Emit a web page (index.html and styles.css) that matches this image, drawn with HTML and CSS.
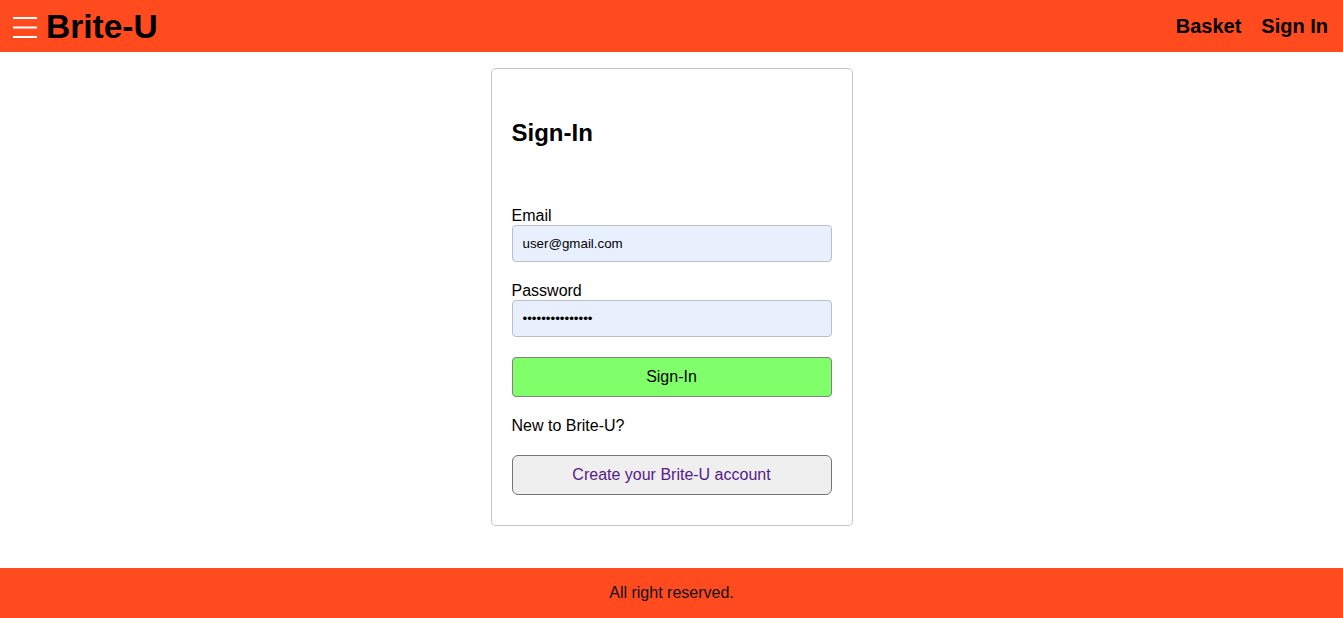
FILE: index.html
```html
<!DOCTYPE html>
<html lang="en">
<head>
<meta charset="utf-8">
<title>Brite-U</title>
<link rel="stylesheet" href="styles.css">
</head>
<body>
<div class="grid">
  <header class="topbar">
    <div class="brand-wrap">
      <button class="menu-btn" aria-label="menu">
        <svg width="26" height="26" viewBox="0 0 26 26"><path d="M1 4h24M1 13.5h24M1 23h24" stroke="#fff" stroke-width="2.2"/></svg>
      </button>
      <a class="brand" href="#">Brite-U</a>
    </div>
    <nav class="nav">
      <a href="#">Basket</a>
      <a href="#">Sign In</a>
    </nav>
  </header>
  <main class="main">
    <form class="card">
      <h2 class="title">Sign-In</h2>
      <label class="label" for="email">Email</label>
      <input class="field" id="email" type="email" value="user@gmail.com">
      <label class="label label-gap" for="password">Password</label>
      <input class="field" id="password" type="password" value="123456789012345">
      <button class="primary" type="button">Sign-In</button>
      <div class="newto">New to Brite-U?</div>
      <a class="secondary" href="#">Create your Brite-U account</a>
    </form>
  </main>
  <footer class="footer">All right reserved.</footer>
</div>
</body>
</html>
```
FILE: styles.css
```css
html, body {
  margin: 0;
  padding: 0;
}
body {
  font-family: "Liberation Sans", Arial, sans-serif;
  color: #000;
  background: #fff;
}
.grid {
  display: grid;
  grid-template-rows: 52px 1fr 50px;
  height: 100vh;
}
.topbar {
  background: #ff4b1e;
  display: flex;
  align-items: center;
  justify-content: space-between;
  padding: 0 15px 0 12px;
}
.brand-wrap {
  display: flex;
  align-items: center;
}
.menu-btn {
  background: none;
  border: 0;
  padding: 0;
  margin: 2px 8px 0 0;
  width: 26px;
  height: 26px;
  display: flex;
}
.brand {
  font-weight: bold;
  font-size: 33.5px;
  color: #000;
  text-decoration: none;
  line-height: 1;
  margin-top: 2px;
}
.nav {
  display: flex;
  gap: 20px;
}
.nav a {
  color: #000;
  text-decoration: none;
  font-weight: bold;
  font-size: 20px;
}
.main {
  display: flex;
  justify-content: center;
  align-items: flex-start;
  padding-top: 16px;
}
.card {
  width: 320px;
  border: 1px solid #c4c4c4;
  border-radius: 5px;
  padding: 50px 20px 30px;
  display: flex;
  flex-direction: column;
}
.title {
  margin: 0;
  font-size: 24px;
  line-height: 27.6px;
  font-weight: bold;
}
.label {
  font-size: 16px;
  line-height: 18px;
  margin-top: 60px;
}
.label-gap {
  margin-top: 20px;
}
.field {
  margin-top: 0;
  height: 37px;
  box-sizing: border-box;
  border: 1px solid #b9bec8;
  border-radius: 4px;
  background: #e8f0fe;
  padding: 0 10px;
  font-family: "Liberation Sans", Arial, sans-serif;
  font-size: 13.33px;
  color: #000;
}
.primary {
  margin-top: 20px;
  height: 40px;
  background: #80ff6b;
  border: 1px solid #7f7f7f;
  border-radius: 4px;
  font-family: "Liberation Sans", Arial, sans-serif;
  font-size: 16px;
  color: #000;
}
.newto {
  margin-top: 20px;
  font-size: 16px;
  line-height: 18px;
}
.secondary {
  margin-top: 20px;
  height: 40px;
  box-sizing: border-box;
  background: #efefef;
  border: 1px solid #767676;
  border-radius: 6px;
  display: flex;
  align-items: center;
  justify-content: center;
  font-size: 16px;
  color: #551a8b;
  text-decoration: none;
}
.footer {
  background: #ff4b1e;
  display: flex;
  align-items: center;
  justify-content: center;
  font-size: 16px;
  color: #111;
}
```
